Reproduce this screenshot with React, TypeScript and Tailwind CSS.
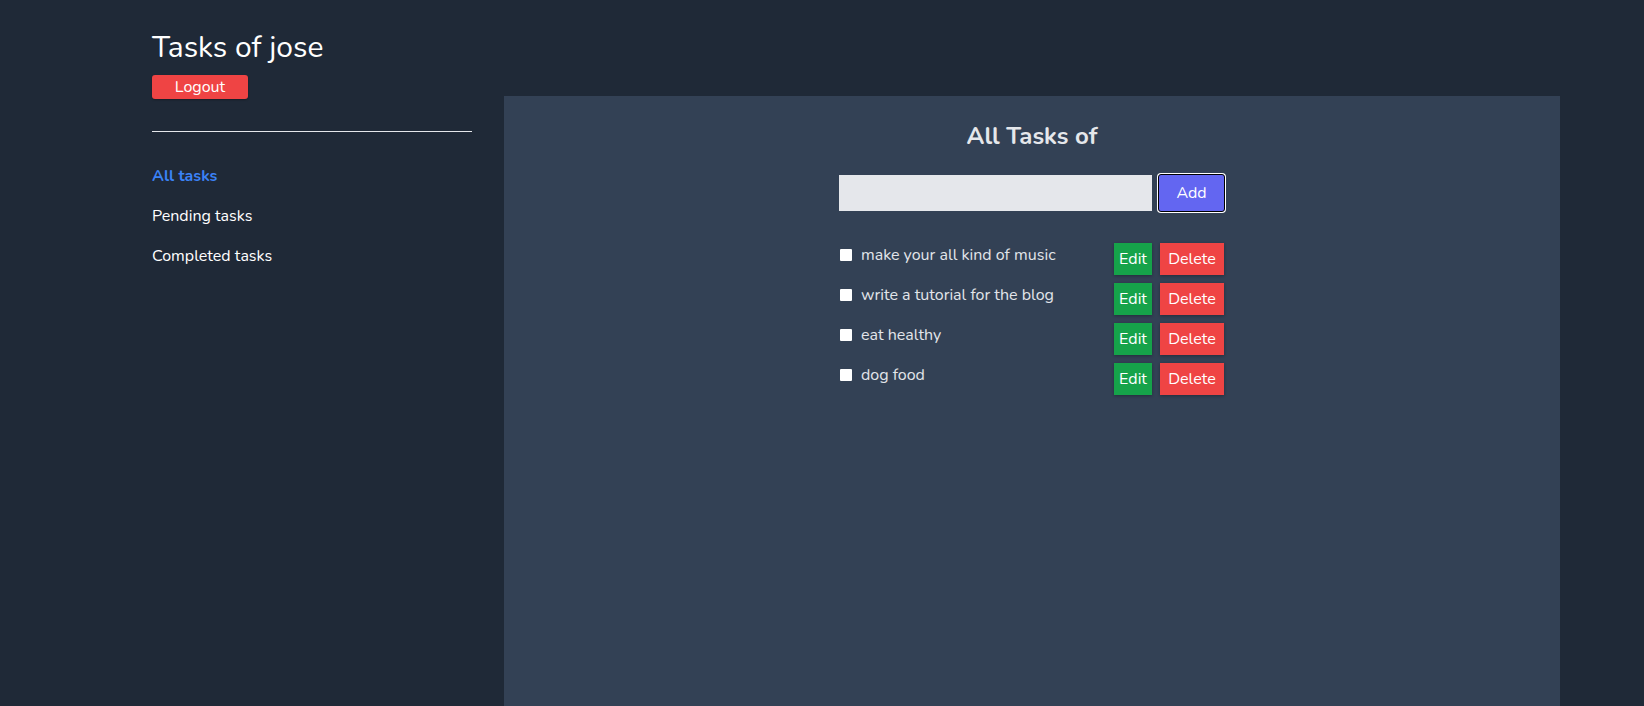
import React from "react";

const tasks = [
  "make your all kind of music",
  "write a tutorial for the blog",
  "eat healthy",
  "dog food",
];

export default function App() {
  return (
    <div
      className="flex h-[706px] w-full overflow-hidden bg-[#1f2937] pl-[152px] text-white"
      style={{ fontFamily: "Nunito, Lato, 'Noto Sans', sans-serif" }}
    >
      <aside className="w-[320px] shrink-0 pt-[30px]">
        <h1 className="text-[30px] leading-[36px] text-white">Tasks of jose</h1>
        <button className="mt-[9px] h-[24px] w-[96px] rounded-[3px] bg-[#ef4444] text-[16px] leading-[24px] text-white shadow-[0_1px_2px_rgba(0,0,0,0.3)]">
          Logout
        </button>
        <hr className="mt-[32px] border-t border-[#e5e7eb]" />
        <nav className="mt-[34px] flex flex-col gap-[19px] text-[16px] leading-[21px]">
          <a className="font-bold text-[#3b82f6]">All tasks</a>
          <a className="text-white">Pending tasks</a>
          <a className="text-white">Completed tasks</a>
        </nav>
      </aside>
      <main className="ml-[32px] mt-[96px] flex w-[1056px] shrink-0 flex-col items-center bg-[#334155] pt-[24px]">
        <h2 className="text-[24px] font-bold leading-[32px] text-[#e5e7eb]">All Tasks of</h2>
        <div className="mt-[22px] flex items-center gap-[6px]">
          <input className="h-[36px] w-[313px] bg-[#e5e7eb] px-2 text-black outline-none" />
          <button className="h-[38px] w-[67px] rounded-[3px] border border-black bg-[#6366f1] text-[16px] text-white ring-1 ring-white">
            Add
          </button>
        </div>
        <ul className="mt-[31px] flex w-[384px] flex-col gap-[8px]">
          {tasks.map((t) => (
            <li key={t} className="flex items-start justify-between">
              <label className="flex items-center gap-[9px] pt-[2px] text-[16px] leading-[20px] text-[#e2e5ea]">
                <input
                  type="checkbox"
                  className="h-[12px] w-[12px] appearance-none rounded-[1px] bg-white"
                />
                {t}
              </label>
              <div className="flex gap-[8px]">
                <button className="h-[32px] w-[38px] bg-[#16a34a] text-[16px] text-white shadow-[0_1px_3px_rgba(0,0,0,0.3)]">
                  Edit
                </button>
                <button className="h-[32px] w-[64px] bg-[#ef4444] text-[16px] text-white shadow-[0_1px_3px_rgba(0,0,0,0.3)]">
                  Delete
                </button>
              </div>
            </li>
          ))}
        </ul>
      </main>
    </div>
  );
}
